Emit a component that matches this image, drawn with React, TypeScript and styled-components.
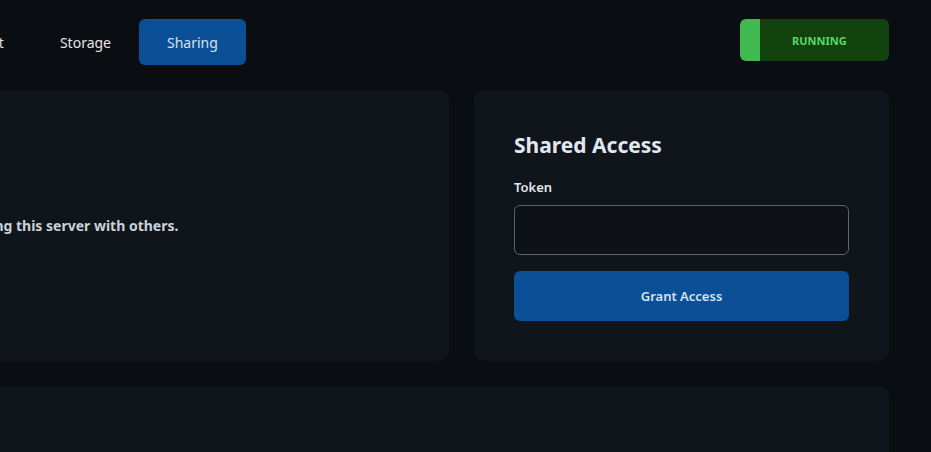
import React from 'react';
import styled, { createGlobalStyle } from 'styled-components';

const colors = {
  page: '#0a0d12',
  card: '#10141b',
  text: '#c9d1d9',
  heading: '#e1e7ee',
  blue: '#0b5096',
  green: '#3fb950',
  greenDark: '#12430e',
  greenText: '#5ad866',
  border: '#5c636e',
};

const GlobalStyle = createGlobalStyle`
  html, body {
    margin: 0;
    padding: 0;
    background: ${colors.page};
    overflow: hidden;
  }
  body {
    font-family: "Noto Sans", "Open Sans", sans-serif;
    color: ${colors.text};
  }
`;

const Page = styled.div`
  display: flex;
  flex-direction: column;
  gap: 25px;
  margin-left: -369px;
  width: calc(369px + 889px);
  padding-top: 19px;
`;

const Header = styled.header`
  display: flex;
  align-items: flex-start;
  justify-content: space-between;
  height: 46px;
`;

const Tabs = styled.nav`
  display: flex;
  margin-left: 148px;
`;

const Tab = styled.button<{ $active?: boolean }>`
  height: 46px;
  padding: 0 28px;
  border: none;
  border-radius: 6px;
  font: inherit;
  font-size: 14px;
  color: ${({ $active }) => ($active ? '#d6e2f0' : '#e6e6e6')};
  background: ${({ $active }) => ($active ? colors.blue : 'transparent')};
  cursor: pointer;
`;

const Status = styled.div`
  display: flex;
  align-items: center;
  width: 149px;
  height: 42px;
  box-sizing: border-box;
  padding-left: 32px;
  border-left: 20px solid ${colors.green};
  border-radius: 6px;
  background: ${colors.greenDark};
  color: ${colors.greenText};
  font-size: 11px;
  font-weight: 700;
`;

const Grid = styled.div`
  display: grid;
  grid-template-columns: 1fr 415px;
  gap: 25px;
`;

const Card = styled.section<{ $height?: number }>`
  box-sizing: border-box;
  min-height: ${({ $height }) => $height ?? 271}px;
  border-radius: 10px;
  background: ${colors.card};
  padding: 40px;
`;

const InfoCard = styled(Card)`
  display: flex;
  align-items: center;
`;

const Description = styled.p`
  margin: 0;
  font-size: 14px;
  font-weight: 700;
  color: ${colors.text};
`;

const Title = styled.h2`
  margin: 0 0 18px;
  font-size: 21px;
  font-weight: 700;
  line-height: 30px;
  color: ${colors.heading};
`;

const Label = styled.label`
  display: block;
  margin-bottom: 9px;
  font-size: 13px;
  font-weight: 600;
  color: ${colors.heading};
`;

const Input = styled.input`
  display: block;
  box-sizing: border-box;
  width: 100%;
  height: 50px;
  margin-bottom: 16px;
  border: 1px solid ${colors.border};
  border-radius: 6px;
  background: #0e1218;
  color: ${colors.heading};
  font: inherit;
  padding: 0 14px;
  outline: none;
`;

const PrimaryButton = styled.button`
  display: block;
  width: 100%;
  height: 50px;
  border: none;
  border-radius: 6px;
  background: ${colors.blue};
  color: #d6e2f0;
  font: inherit;
  font-size: 13px;
  font-weight: 600;
  cursor: pointer;
`;

const tabs = ['Console', 'Management', 'Storage', 'Sharing'];

export default function App() {
  return (
    <>
      <GlobalStyle />
      <Page>
        <Header>
          <Tabs>
            {tabs.map((t) => (
              <Tab key={t} $active={t === 'Sharing'}>
                {t}
              </Tab>
            ))}
          </Tabs>
          <Status>RUNNING</Status>
        </Header>
        <Grid>
          <InfoCard>
            <Description>
              Give another user access to this panel by sharing this server with others.
            </Description>
          </InfoCard>
          <Card>
            <Title>Shared Access</Title>
            <Label htmlFor="token">Token</Label>
            <Input id="token" type="text" />
            <PrimaryButton>Grant Access</PrimaryButton>
          </Card>
        </Grid>
        <Card $height={200} />
      </Page>
    </>
  );
}
